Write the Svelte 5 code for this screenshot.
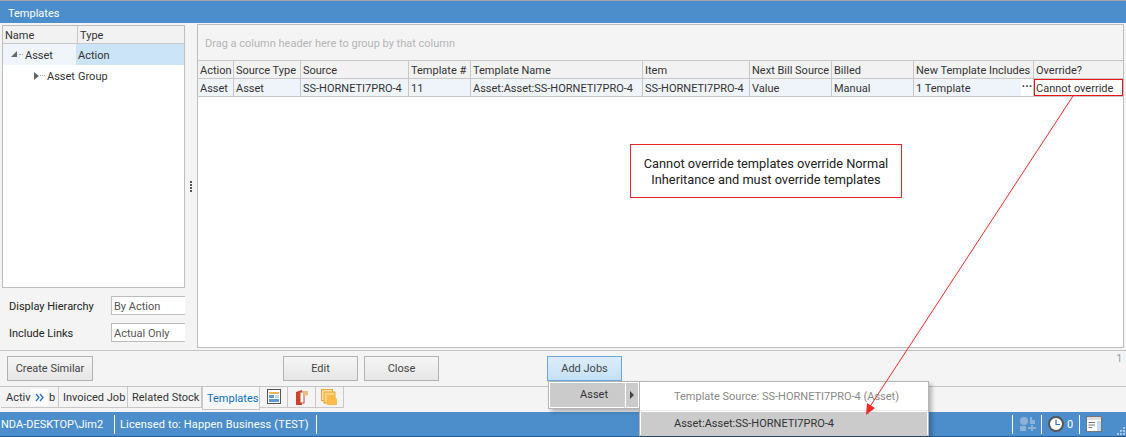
<script>
    const columns = [
        { name: "Action", width: 36, value: "Asset" },
        { name: "Source Type", width: 67, value: "Asset" },
        { name: "Source", width: 108, value: "SS-HORNETI7PRO-4" },
        { name: "Template #", width: 62, value: "11" },
        { name: "Template Name", width: 172, value: "Asset:Asset:SS-HORNETI7PRO-4" },
        { name: "Item", width: 107, value: "SS-HORNETI7PRO-4" },
        { name: "Next Bill Source", width: 82, value: "Value" },
        { name: "Billed", width: 82, value: "Manual" },
        { name: "New Template Includes", width: 120, value: "1 Template" },
        { name: "Override?", width: 89, value: "Cannot override" },
    ];
    const gridCols = columns.map((c) => c.width + "px").join(" ");
</script>

<div class="window">
    <header class="title">Templates</header>

    <div class="main">
        <aside class="left">
            <div class="tree">
                <div class="tree-head">
                    <div class="th name">Name</div>
                    <div class="th">Type</div>
                </div>
                <div class="tree-row first">
                    <div class="tree-name sel-light">
                        <svg class="twist" width="7" height="8" viewBox="0 0 7 8"><path d="M0 7 L6 7 L6 1 Z" fill="#666" /></svg>
                        <span class="dots"></span>
                        <span class="node">Asset</span>
                    </div>
                    <div class="tree-type sel">Action</div>
                </div>
                <div class="tree-row second">
                    <div class="tree-name child">
                        <svg class="twist" width="6" height="10" viewBox="0 0 6 10"><path d="M1 1 L6 5 L1 9 Z" fill="#666" /></svg>
                        <span class="dots"></span>
                        <span class="node">Asset</span>
                    </div>
                    <div class="tree-type">Group</div>
                </div>
            </div>
            <div class="field">
                <span class="label">Display Hierarchy</span>
                <span class="input">By Action</span>
            </div>
            <div class="field">
                <span class="label">Include Links</span>
                <span class="input">Actual Only</span>
            </div>
        </aside>

        <div class="splitter"><i></i><i></i><i></i><i></i></div>

        <section class="grid-panel">
            <div class="group-hint">Drag a column header here to group by that column</div>
            <div class="grid-row head" style="grid-template-columns: {gridCols}">
                {#each columns as c}
                    <div class="cell">{c.name}</div>
                {/each}
            </div>
            <div class="grid-row data" style="grid-template-columns: {gridCols}">
                {#each columns as c}
                    <div class="cell" class:override={c.name === "Override?"}>
                        {c.value}
                        {#if c.name === "New Template Includes"}
                            <span class="more">···</span>
                        {/if}
                    </div>
                {/each}
            </div>
        </section>
    </div>

    <div class="actions">
        <button class="btn similar">Create Similar</button>
        <button class="btn edit">Edit</button>
        <button class="btn close">Close</button>
        <button class="btn add">Add Jobs</button>
        <span class="page">1</span>
    </div>

    <div class="tabs">
        <div class="tab t1">
            Activ<span class="tail">b</span>
            <span class="chev">
                <svg width="9" height="9" viewBox="0 0 9 9">
                    <path d="M1 1 L4 4.5 L1 8 M5 1 L8 4.5 L5 8" fill="none" stroke="#2a6fc0" stroke-width="1.3" />
                </svg>
            </span>
        </div>
        <div class="tab t2">Invoiced Job</div>
        <div class="tab t3">Related Stock</div>
        <div class="tab active">Templates</div>
        <div class="tab icon">
            <svg width="14" height="15" viewBox="0 0 14 15">
                <rect x="0.5" y="0.5" width="13" height="14" fill="#fff" stroke="#555" />
                <rect x="2" y="3" width="10" height="2" fill="#ecb65a" />
                <rect x="2" y="6" width="5" height="3" fill="#5b9bd5" />
                <rect x="8" y="6" width="4" height="3" fill="#bcd7ee" />
                <rect x="2" y="10" width="10" height="3" fill="#5b9bd5" />
            </svg>
        </div>
        <div class="tab icon">
            <svg width="14" height="17" viewBox="0 0 14 17">
                <path d="M1 3 L7 1 L7 16 L1 16 Z" fill="#c8432c" />
                <rect x="5" y="3" width="4" height="11" fill="#fff" stroke="#c8432c" />
                <path d="M8 2 L13 2 L13 6 L8 7 Z" fill="#e9bb7c" />
            </svg>
        </div>
        <div class="tab icon">
            <svg width="17" height="16" viewBox="0 0 17 16">
                <rect x="0.5" y="0.5" width="11" height="11" fill="#ffe2a8" stroke="#e8a33d" />
                <rect x="3" y="3" width="11" height="11" fill="#ffd27a" stroke="#e8a33d" />
                <path d="M6 6 H12 L16 10 V16 H6 Z" fill="#fdb94a" />
            </svg>
        </div>
    </div>

    <footer class="status">
        <span class="st host">NDA-DESKTOP\Jim2</span>
        <span class="st lic">Licensed to: Happen Business (TEST)</span>
        <span class="st-right">
            <span class="sr s-group">
                <svg width="18" height="16" viewBox="0 0 18 16">
                    <circle cx="5" cy="5" r="4" fill="#8eb2d6" />
                    <path d="M11 1 H13 V4 H16 V8 H11 Z" fill="#8eb2d6" />
                    <path d="M1 10 H7 V15 H1 Z M12 9 H14 V11 H17 V13 H14 V15 H12 V13 H9 V11 H12 Z" fill="#8eb2d6" />
                </svg>
            </span>
            <span class="sr s-clock">
                <svg width="16" height="16" viewBox="0 0 16 16">
                    <circle cx="8" cy="8" r="7" fill="#fff" stroke="#555" stroke-width="2" />
                    <path d="M8 3.5 V8.5 H12" fill="none" stroke="#2a6fc0" stroke-width="1.2" />
                </svg>
                <span>0</span>
            </span>
            <span class="sr s-panel">
                <svg width="16" height="16" viewBox="0 0 16 16">
                    <rect x="0.5" y="0.5" width="15" height="15" fill="#fff" stroke="#777" />
                    <rect x="1" y="1" width="14" height="3" fill="#ddd" />
                    <rect x="11" y="5" width="4" height="10" fill="#bcdcf5" />
                    <path d="M2.5 6.5 H9 M2.5 9 H9 M2.5 11.5 H6" stroke="#777" />
                </svg>
            </span>
        </span>
        <svg class="grip" width="9" height="9" viewBox="0 0 9 9">
            <path d="M6 0h2v2H6z M3 3h2v2H3z M6 3h2v2H6z M0 6h2v2H0z M3 6h2v2H3z M6 6h2v2H6z" fill="#a9c6e4" />
        </svg>
    </footer>

    <div class="menu root-menu">
        <div class="menu-item">Asset<span class="divider"></span><span class="arrow"></span></div>
    </div>
    <div class="menu sub-menu">
        <div class="sub-title">Template Source: SS-HORNETI7PRO-4 (Asset)</div>
        <div class="sub-item">Asset:Asset:SS-HORNETI7PRO-4</div>
    </div>

    <div class="note">Cannot override templates override Normal Inheritance and must override templates</div>

    <svg class="overlay" width="1126" height="437" viewBox="0 0 1126 437">
        <line x1="1073" y1="96" x2="869" y2="408" stroke="#ee2a2a" stroke-width="1" />
        <path d="M866 415 L867 403 L875 408 Z" fill="#ee2a2a" />
    </svg>
</div>

<style>
    :global(body) {
        margin: 0;
        background: #f4f4f4;
    }

    .window {
        position: relative;
        width: 1126px;
        height: 437px;
        overflow: hidden;
        display: flex;
        flex-direction: column;
        box-sizing: border-box;
        background: #f4f4f4;
        border-top: 1px solid #a5a5a5;
        font-family: Roboto, "Open Sans", sans-serif;
        font-size: 11px;
        color: #333;
    }

    .title {
        height: 22px;
        line-height: 25px;
        padding-left: 8px;
        background: #4c8ecb;
        color: #fff;
        flex: none;
    }

    .main {
        display: flex;
        height: 327px;
        flex: none;
        padding-left: 2px;
    }

    .left {
        width: 183px;
        flex: none;
        padding-top: 2px;
    }

    .tree {
        height: 263px;
        box-sizing: border-box;
        background: #fff;
        border: 1px solid #bdbdbd;
    }

    .tree-head {
        display: flex;
        height: 17px;
        background: #f2f2f2;
        border-bottom: 1px solid #c8c8c8;
        line-height: 19px;
    }

    .th {
        padding-left: 2px;
    }

    .th.name {
        width: 72px;
        border-right: 1px solid #c8c8c8;
    }

    .tree-row {
        display: flex;
        height: 21px;
        line-height: 23px;
    }

    .tree-name {
        width: 73px;
        box-sizing: border-box;
        display: flex;
        align-items: flex-start;
        padding-left: 8px;
        gap: 1px;
    }

    .tree-name.child {
        padding-left: 30px;
    }

    .twist {
        flex: none;
        margin-top: 6px;
    }

    .dots {
        width: 4px;
        margin-top: 10px;
        border-top: 1px dotted #aaa;
        margin-right: 1px;
    }

    .child .dots {
        width: 5px;
    }

    .tree-type {
        flex: 1;
        padding-left: 2px;
    }

    .sel-light {
        background: #eff5fa;
    }

    .sel {
        background: #cce4f7;
    }

    .field {
        display: flex;
        align-items: flex-start;
        height: 19px;
        margin-top: 8px;
        padding-left: 7px;
        line-height: 21px;
    }

    .label {
        width: 102px;
        color: #222;
    }

    .input {
        flex: 1;
        height: 19px;
        line-height: 20px;
        box-sizing: border-box;
        background: #fff;
        border: 1px solid #bdbdbd;
        border-right: none;
        padding-left: 2px;
        color: #555;
    }

    .splitter {
        width: 12px;
        flex: none;
        display: flex;
        flex-direction: column;
        align-items: center;
        justify-content: center;
        gap: 1px;
    }

    .splitter i {
        width: 2px;
        height: 2px;
        background: #555;
    }

    .grid-panel {
        width: 927px;
        box-sizing: border-box;
        margin-top: 1px;
        height: 324px;
        background: #fff;
        border: 1px solid #bdbdbd;
        flex: none;
    }

    .group-hint {
        height: 35px;
        line-height: 38px;
        padding-left: 7px;
        background: #f4f4f4;
        color: #b5b5b5;
    }

    .grid-row {
        display: grid;
    }

    .grid-row.head {
        height: 19px;
        background: #f2f2f2;
        border-top: 1px solid #c8c8c8;
        border-bottom: 1px solid #c8c8c8;
        box-sizing: border-box;
        line-height: 19px;
    }

    .grid-row.data {
        height: 18px;
        background: #eff4fa;
        border-bottom: 1px solid #c8c8c8;
        box-sizing: border-box;
        line-height: 19px;
    }

    .cell {
        position: relative;
        padding-left: 2px;
        border-right: 1px solid #c8c8c8;
        white-space: nowrap;
        overflow: hidden;
    }

    .cell:last-child {
        border-right: none;
    }

    .override {
        background: #fff;
        box-shadow: inset 0 0 0 1px #f01414;
    }

    .more {
        position: absolute;
        right: 0;
        top: 0;
        bottom: 0;
        width: 12px;
        background: #fff;
        text-align: center;
        font-size: 12px;
        font-weight: 700;
        line-height: 16px;
        color: #444;
    }

    .actions {
        position: relative;
        display: flex;
        align-items: flex-start;
        height: 37px;
        flex: none;
        box-sizing: border-box;
        border-top: 1px solid #c4c4c4;
        border-bottom: 1px solid #c4c4c4;
        padding: 5px 0 0 7px;
        background: #f4f4f4;
    }

    .btn {
        height: 25px;
        padding: 0;
        box-sizing: border-box;
        font: inherit;
        color: #444;
        background: linear-gradient(#f6f6f6, #e6e6e6);
        border: 1px solid #b2b2b2;
    }

    .similar {
        width: 86px;
    }

    .edit {
        width: 75px;
        margin-left: 190px;
    }

    .close {
        width: 75px;
        margin-left: 6px;
    }

    .add {
        width: 75px;
        margin-left: 108px;
        background: linear-gradient(#dcedfb, #c5e0f8);
        border-color: #6aa7e0;
    }

    .page {
        position: absolute;
        right: 4px;
        top: 2px;
        color: #999;
        font-size: 10px;
    }

    .tabs {
        display: flex;
        height: 25px;
        flex: none;
        padding-left: 1px;
        background: #f4f4f4;
    }

    .tab {
        height: 21px;
        box-sizing: border-box;
        line-height: 22px;
        padding: 0 4px;
        border-right: 1px solid #c8c8c8;
        border-bottom: 1px solid #c8c8c8;
        white-space: nowrap;
    }

    .t1 {
        position: relative;
        width: 58px;
        padding-left: 5px;
    }

    .chev {
        position: absolute;
        left: 30px;
        top: 2px;
        width: 17px;
        height: 17px;
        background: #fff;
        display: flex;
        align-items: center;
        justify-content: center;
    }

    .tail {
        position: absolute;
        left: 48px;
    }

    .t2 {
        width: 69px;
    }

    .t3 {
        width: 74px;
    }

    .active {
        width: 58px;
        height: 23px;
        line-height: 24px;
        color: #0a6fc2;
        background: #f8f8f8;
        border-left: 1px solid #c8c8c8;
    }

    .icon {
        width: 28px;
        padding: 2px 0 0;
        display: flex;
        justify-content: center;
    }

    .status {
        position: relative;
        display: flex;
        align-items: center;
        height: 25px;
        flex: none;
        box-sizing: border-box;
        background: #4c8ecb;
        border-bottom: 1px solid #2c5d8c;
        color: #fff;
    }

    .st {
        box-sizing: border-box;
        height: 19px;
        line-height: 19px;
    }

    .host {
        width: 115px;
        padding-left: 1px;
        border-right: 1px solid #fff;
    }

    .lic {
        width: 202px;
        padding-left: 5px;
        border-right: 1px solid #fff;
        letter-spacing: 0.15px;
    }

    .st-right {
        margin-left: auto;
        display: flex;
        align-items: center;
        margin-right: 15px;
    }

    .sr {
        height: 19px;
        box-sizing: border-box;
        display: flex;
        align-items: center;
        gap: 3px;
        border-left: 1px solid #fff;
    }

    .s-group {
        width: 29px;
        padding-left: 6px;
    }

    .s-clock {
        width: 38px;
        padding-left: 6px;
    }

    .s-panel {
        width: 32px;
        padding-left: 6px;
    }

    .grip {
        position: absolute;
        right: 0;
        bottom: 0;
    }

    .menu {
        position: absolute;
        box-sizing: border-box;
        background: #fff;
        border: 1px solid #b5b5b5;
        box-shadow: 3px 3px 4px rgba(0, 0, 0, 0.25);
    }

    .root-menu {
        left: 548px;
        top: 380px;
        width: 92px;
        height: 28px;
        padding: 1px;
    }

    .menu-item {
        position: relative;
        height: 24px;
        line-height: 24px;
        background: #cbcbcb;
        text-align: right;
        padding-right: 30px;
    }

    .divider {
        position: absolute;
        right: 12px;
        top: 0;
        bottom: 0;
        width: 1px;
        background: #fff;
    }

    .arrow {
        position: absolute;
        right: 4px;
        top: 8px;
        border-left: 4px solid #444;
        border-top: 4px solid transparent;
        border-bottom: 4px solid transparent;
    }

    .sub-menu {
        left: 639px;
        top: 380px;
        width: 290px;
        height: 55px;
        padding: 1px;
    }

    .sub-title {
        height: 27px;
        line-height: 27px;
        padding-left: 33px;
        color: #888;
        border-bottom: 1px solid #e6e6e6;
        margin-bottom: 1px;
    }

    .sub-item {
        height: 24px;
        line-height: 24px;
        background: #cbcbcb;
        padding-left: 33px;
    }

    .note {
        position: absolute;
        left: 630px;
        top: 143px;
        width: 272px;
        height: 54px;
        box-sizing: border-box;
        background: #fff;
        border: 1px solid #e8262c;
        padding: 11px 8px 0;
        font-size: 12.8px;
        line-height: 16px;
        text-align: center;
        color: #222;
    }

    .overlay {
        position: absolute;
        left: 0;
        top: -1px;
        pointer-events: none;
    }
</style>
